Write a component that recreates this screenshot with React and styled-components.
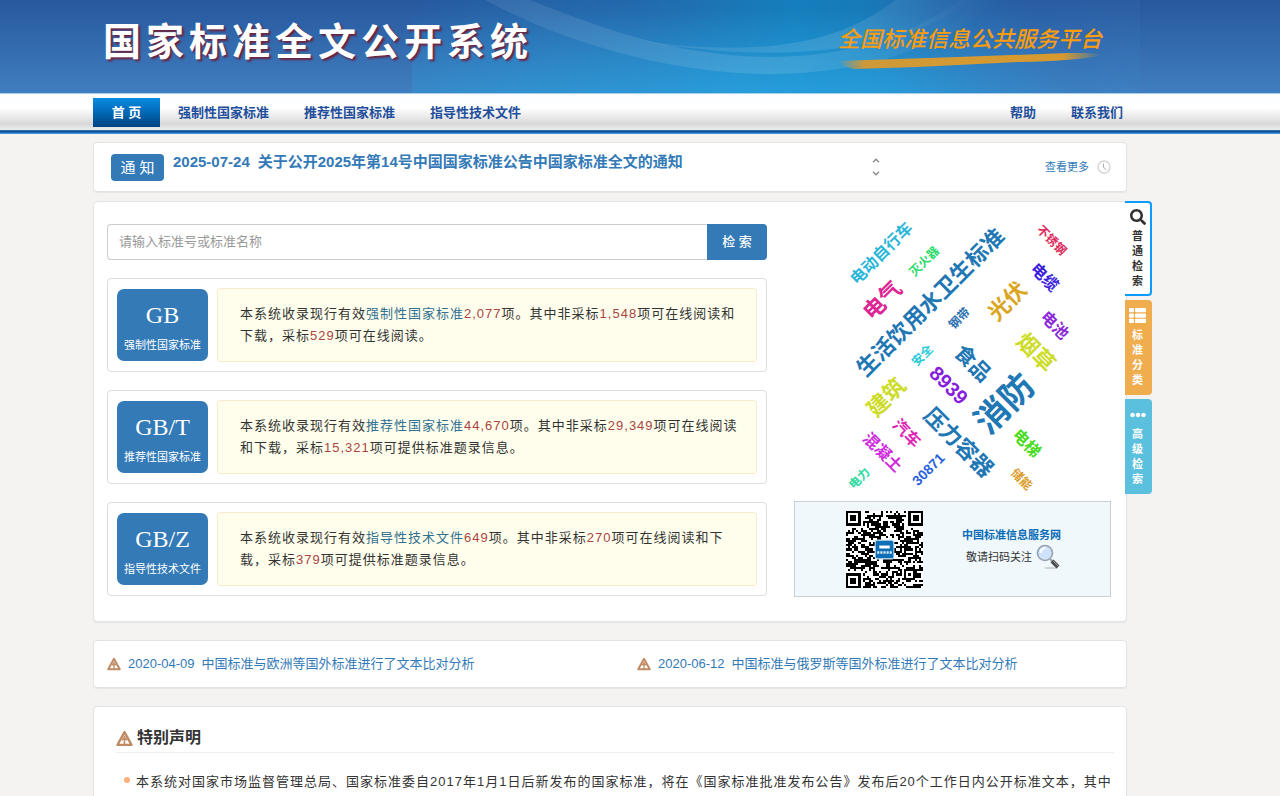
import styled, { createGlobalStyle } from "styled-components";
import { FaSearch, FaThList, FaEllipsisH } from "react-icons/fa";

const words = [
    { text: "消防", x: 210, y: 179, size: 34, angle: -45, color: "#1f77b4" },
    { text: "生活饮用水卫生标准", x: 136, y: 78, size: 22, angle: -45, color: "#1f77b4" },
    { text: "压力容器", x: 165, y: 218, size: 22, angle: 45, color: "#1f77b4" },
    { text: "食品", x: 179, y: 139, size: 21, angle: 45, color: "#1f77b4" },
    { text: "光伏", x: 213, y: 77, size: 22, angle: -45, color: "#daa520" },
    { text: "烟草", x: 242, y: 128, size: 22, angle: 45, color: "#cddc28" },
    { text: "建筑", x: 92, y: 173, size: 22, angle: -45, color: "#cddc28" },
    { text: "电气", x: 88, y: 76, size: 22, angle: -45, color: "#dd2694" },
    { text: "8939", x: 155, y: 161, size: 20, angle: 45, color: "#8420dd" },
    { text: "电动自行车", x: 87, y: 29, size: 16, angle: -45, color: "#29b6d8" },
    { text: "电缆", x: 251, y: 53, size: 16, angle: 45, color: "#3a20dc" },
    { text: "电池", x: 261, y: 101, size: 16, angle: 45, color: "#8b2adb" },
    { text: "电梯", x: 233, y: 219, size: 16, angle: 45, color: "#48dc20" },
    { text: "汽车", x: 113, y: 209, size: 16, angle: 45, color: "#dd26b4" },
    { text: "混凝土", x: 89, y: 228, size: 16, angle: 45, color: "#d02ade" },
    { text: "30871", x: 134, y: 245, size: 14, angle: -45, color: "#2a62dc" },
    { text: "灭火器", x: 130, y: 37, size: 12, angle: -45, color: "#2edb6e" },
    { text: "不锈钢", x: 258, y: 16, size: 12, angle: 45, color: "#dc2a5c" },
    { text: "钢带", x: 165, y: 94, size: 12, angle: -45, color: "#2a70b0" },
    { text: "安全", x: 128, y: 131, size: 12, angle: -45, color: "#2acbd8" },
    { text: "电力", x: 65, y: 254, size: 12, angle: -45, color: "#2edba0" },
    { text: "储能", x: 228, y: 255, size: 12, angle: 45, color: "#dc9a28" },
];

const QR_SIZE = 37;

const finderAt = (x, y) => {
    const corners = [[0, 0], [QR_SIZE - 7, 0], [0, QR_SIZE - 7]];
    for (const [cx, cy] of corners) {
        const dx = x - cx;
        const dy = y - cy;
        if (dx >= -1 && dx <= 7 && dy >= -1 && dy <= 7) {
            const ring = Math.max(Math.abs(dx - 3), Math.abs(dy - 3));
            return { inside: true, dark: ring === 3 || ring <= 1 };
        }
    }
    // small alignment mark
    const ring = Math.max(Math.abs(x - 30), Math.abs(y - 30));
    if (ring <= 2) return { inside: true, dark: ring !== 1 };
    return { inside: false };
};

const buildQrPath = () => {
    let seed = 20377;
    let last = false;
    let d = "";
    for (let y = 0; y < QR_SIZE; y++) {
        for (let x = 0; x < QR_SIZE; x++) {
            seed = (seed * 48271) % 2147483647;
            const finder = finderAt(x, y);
            const dark = finder.inside ? finder.dark : seed / 2147483647 > (last ? 0.38 : 0.55);
            if (dark) d += `M${x} ${y}h1v1h-1z`;
            last = dark;
        }
    }
    return d;
};

const qrPath = buildQrPath();

const WarnIcon = ({ size }) => (
    <svg width={size} height={size} viewBox="0 0 16 16" aria-hidden="true">
        <path d="M8 2L14.6 14H1.4Z" fill="none" stroke="#c08a62" strokeWidth="2.2" strokeLinejoin="round" />
        <path d="M8 5.5V14M5.6 9.6L8 7l2.4 2.6" fill="none" stroke="#c08a62" strokeWidth="1.5" />
    </svg>
);

const BannerArt = () => (
    <ArtSvg viewBox="0 0 1280 93" preserveAspectRatio="xMidYMid slice" aria-hidden="true">
        <defs>
            <linearGradient id="base" x1="0" y1="0" x2="0" y2="1">
                <stop offset="0" stopColor="#27589e" />
                <stop offset="1" stopColor="#407ebf" />
            </linearGradient>
            <linearGradient id="glow" x1="0" y1="0" x2="1" y2="0">
                <stop offset="0" stopColor="#1a94cf" stopOpacity="0" />
                <stop offset="0.3" stopColor="#1a80c0" stopOpacity="0.4" />
                <stop offset="0.52" stopColor="#1088c4" stopOpacity="0.8" />
                <stop offset="0.62" stopColor="#1088c4" stopOpacity="0.7" />
                <stop offset="0.85" stopColor="#2f6eb4" stopOpacity="0.2" />
                <stop offset="1" stopColor="#3f78b8" stopOpacity="0.15" />
            </linearGradient>
            <linearGradient id="lift" x1="0" y1="0" x2="0" y2="1">
                <stop offset="0.1" stopColor="#2aa6e2" stopOpacity="0" />
                <stop offset="1" stopColor="#2aa6e2" stopOpacity="0.75" />
            </linearGradient>
            <linearGradient id="liftFade" x1="0" y1="0" x2="1" y2="0">
                <stop offset="0" stopColor="#fff" stopOpacity="0.4" />
                <stop offset="0.45" stopColor="#fff" />
                <stop offset="0.65" stopColor="#fff" stopOpacity="0.9" />
                <stop offset="0.9" stopColor="#fff" stopOpacity="0.15" />
                <stop offset="1" stopColor="#fff" stopOpacity="0.1" />
            </linearGradient>
            <mask id="liftMask">
                <rect x="412" width="728" height="93" fill="url(#liftFade)" />
            </mask>
            <linearGradient id="wave" x1="0" y1="0" x2="1" y2="0">
                <stop offset="0" stopColor="#fff" stopOpacity="0.08" />
                <stop offset="0.6" stopColor="#fff" stopOpacity="0.12" />
                <stop offset="1" stopColor="#fff" stopOpacity="0" />
            </linearGradient>
        </defs>
        <rect width="1280" height="93" fill="url(#base)" />
        <rect x="412" width="728" height="93" fill="url(#glow)" />
        <rect x="412" width="728" height="93" fill="url(#lift)" mask="url(#liftMask)" />
        <path d="M485 0C570 46 680 75 775 74C860 73 940 50 1000 0H960C900 44 830 57 770 57C680 56 610 32 530 0Z" fill="url(#wave)" />
        <path d="M640 41C740 54 830 52 895 0H975C900 50 790 66 640 41Z" fill="url(#wave)" />
    </ArtSvg>
);

const Magnifier = () => (
    <svg width="24" height="26" viewBox="0 0 24 26" aria-hidden="true">
        <ellipse cx="15" cy="24" rx="7" ry="1" fill="#c9cfd2" />
        <path d="M14 15l3 3" stroke="#9a9fa5" strokeWidth="2" />
        <path d="M16 17l6 6" stroke="#4a4a4a" strokeWidth="4" />
        <path d="M17 17l5 5" stroke="#999" strokeWidth="1" />
        <circle cx="9" cy="9" r="7.5" fill="#cfe2fb" stroke="#98a2b0" strokeWidth="1.6" />
        <path d="M4.5 9a5 5 0 0 1 5-5" fill="none" stroke="#fff" strokeWidth="2" />
    </svg>
);

const StandardCard = ({ code, label, children }) => (
    <Card>
        <CodeLink href="#">
            <Code>{code}</Code>
            <CodeLabel>{label}</CodeLabel>
        </CodeLink>
        <Summary>
            <p>{children}</p>
        </Summary>
    </Card>
);

const App = () => {
    return (
        <>
            <GlobalStyle />
            <Banner>
                <BannerArt />
                <SiteTitle>国家标准全文公开系统</SiteTitle>
                <Platform href="#">
                    全国标准信息公共服务平台
                    <svg width="264" height="16" viewBox="0 0 264 16" aria-hidden="true">
                        <defs>
                            <linearGradient id="brush">
                                <stop offset="0" stopColor="#d89a2e" stopOpacity="0" />
                                <stop offset="0.1" stopColor="#cf9938" />
                                <stop offset="0.85" stopColor="#d89a2e" />
                                <stop offset="1" stopColor="#d89a2e" stopOpacity="0" />
                            </linearGradient>
                        </defs>
                        <path d="M0 8L120 4L230 0Q250 -1 264 2Q240 8 180 9L80 14L16 16Q4 13 0 8Z" fill="url(#brush)" />
                    </svg>
                </Platform>
            </Banner>
            <Nav>
                <HomeLink href="#">首 页</HomeLink>
                <NavLink href="#">强制性国家标准</NavLink>
                <NavLink href="#">推荐性国家标准</NavLink>
                <NavLink href="#">指导性技术文件</NavLink>
                <Spacer />
                <NavLink href="#">帮助</NavLink>
                <NavLink href="#" $last>联系我们</NavLink>
            </Nav>
            <Page>
                <NoticePanel>
                    <NoticeTag>通 知</NoticeTag>
                    <NoticeLink href="#">
                        <span>2025-07-24</span>
                        <span>关于公开2025年第14号中国国家标准公告中国家标准全文的通知</span>
                    </NoticeLink>
                    <Arrows>
                        <button type="button" aria-label="上一条">
                            <svg width="8" height="5" viewBox="0 0 8 5"><path d="M1 4.2L4 1.2l3 3" /></svg>
                        </button>
                        <button type="button" aria-label="下一条">
                            <svg width="8" height="5" viewBox="0 0 8 5"><path d="M1 .8l3 3 3-3" /></svg>
                        </button>
                    </Arrows>
                    <MoreLink href="#">
                        查看更多
                        <svg width="14" height="14" viewBox="0 0 14 14" aria-hidden="true">
                            <circle cx="7" cy="7" r="6" fill="none" stroke="#d4d4d4" strokeWidth="1.4" />
                            <path d="M6.5 3.5V7l2.6 3" fill="none" stroke="#aaa" />
                        </svg>
                    </MoreLink>
                </NoticePanel>

                <MainPanel>
                    <Left>
                        <SearchForm onSubmit={(e) => e.preventDefault()}>
                            <SearchInput type="text" aria-label="标准号或标准名称" placeholder="请输入标准号或标准名称" />
                            <SearchButton type="submit">检 索</SearchButton>
                        </SearchForm>
                        <StandardCard code="GB" label="强制性国家标准">
                            本系统收录现行有效<a href="#">强制性国家标准</a><b>2,077</b>项。其中非采标<b>1,548</b>项可在线阅读和下载，采标<b>529</b>项可在线阅读。
                        </StandardCard>
                        <StandardCard code="GB/T" label="推荐性国家标准">
                            本系统收录现行有效<a href="#">推荐性国家标准</a><b>44,670</b>项。其中非采标<b>29,349</b>项可在线阅读和下载，采标<b>15,321</b>项可提供标准题录信息。
                        </StandardCard>
                        <StandardCard code="GB/Z" label="指导性技术文件">
                            本系统收录现行有效<a href="#">指导性技术文件</a><b>649</b>项。其中非采标<b>270</b>项可在线阅读和下载，采标<b>379</b>项可提供标准题录信息。
                        </StandardCard>
                    </Left>
                    <Right>
                        <Cloud viewBox="0 0 317 268">
                            {words.map((w) => (
                                <text
                                    key={w.text}
                                    transform={`translate(${w.x} ${w.y}) rotate(${w.angle})`}
                                    fontSize={w.size}
                                    fill={w.color}
                                    textAnchor="middle"
                                    dy="0.37em"
                                >
                                    {w.text}
                                </text>
                            ))}
                        </Cloud>
                        <QrBox>
                            <svg width="77" height="77" viewBox="0 0 37 37" role="img" aria-label="二维码">
                                <rect width="37" height="37" fill="#fff" />
                                <path d={qrPath} fill="#000" shapeRendering="crispEdges" />
                                <rect x="14" y="14" width="9" height="9" rx="1" fill="#0d6fb8" stroke="#cfe6f5" strokeWidth="0.5" />
                                <path d="M16 17.3h5" stroke="#fff" strokeWidth="1.4" />
                                <path d="M15 20h7" stroke="#dceefa" strokeWidth="1.2" strokeDasharray="1 .5" />
                            </svg>
                            <QrText>
                                <a href="#">中国标准信息服务网</a>
                                <QrHint>
                                    敬请扫码关注
                                    <Magnifier />
                                </QrHint>
                            </QrText>
                        </QrBox>
                    </Right>
                    <SideTabs>
                        <SideTab href="#" $color="#333" $bg="#fff" $border="#0c9cff">
                            <FaSearch size={16} />
                            <span>普通检索</span>
                        </SideTab>
                        <SideTab href="#" $color="#fff" $bg="#f0ad4e" $border="#f0ad4e">
                            <FaThList size={17} />
                            <span>标准分类</span>
                        </SideTab>
                        <SideTab href="#" $color="#fff" $bg="#5bc0de" $border="#5bc0de">
                            <FaEllipsisH size={16} />
                            <span>高级检索</span>
                        </SideTab>
                    </SideTabs>
                </MainPanel>

                <LinksPanel>
                    <NewsLink href="#">
                        <WarnIcon size={14} />
                        <span>2020-04-09</span>
                        <span>中国标准与欧洲等国外标准进行了文本比对分析</span>
                    </NewsLink>
                    <NewsLink href="#">
                        <WarnIcon size={14} />
                        <span>2020-06-12</span>
                        <span>中国标准与俄罗斯等国外标准进行了文本比对分析</span>
                    </NewsLink>
                </LinksPanel>

                <Statement>
                    <StatementTitle>
                        <WarnIcon size={17} />
                        特别声明
                    </StatementTitle>
                    <StatementList>
                        <li>本系统对国家市场监督管理总局、国家标准委自2017年1月1日后新发布的国家标准，将在《国家标准批准发布公告》发布后20个工作日内公开标准文本，其中</li>
                    </StatementList>
                </Statement>
            </Page>
        </>
    );
};

const GlobalStyle = createGlobalStyle`
    * {
        box-sizing: border-box;
    }
    body {
        margin: 0;
        background: #f4f3f1;
        color: #333;
        font-family: "Liberation Sans", "Noto Sans CJK SC", sans-serif;
        font-size: 13px;
        line-height: 22px;
    }
    a {
        color: #337ab7;
        text-decoration: none;
    }
    h1, h2, p, ul {
        margin: 0;
        padding: 0;
    }
    button, input {
        font: inherit;
    }
`
const Banner = styled.header`
    position: relative;
    display: flex;
    align-items: center;
    justify-content: space-between;
    height: 93px;
    padding: 0 178px 0 103px;
    overflow: hidden;
    background: #27589e;
`
const ArtSvg = styled.svg`
    position: absolute;
    inset: 0;
    width: 100%;
    height: 100%;
`
const SiteTitle = styled.h1`
    position: relative;
    padding-bottom: 10px;
    color: white;
    font-size: 38px;
    line-height: 44px;
    font-weight: 700;
    letter-spacing: 5px;
    text-shadow: 2px 2px 2px #6b2340;
`
const Platform = styled.a`
    position: relative;
    display: flex;
    flex-direction: column;
    padding-top: 2px;
    color: #ff9c0a;
    font-size: 22px;
    line-height: 26px;
    font-style: italic;
    font-weight: 500;
`
const Nav = styled.nav`
    display: flex;
    align-items: center;
    height: 41px;
    padding: 0 153px 4px 93px;
    border-top: 1px solid #a9cdec;
    background:
        linear-gradient(#4a7aa8, #0b4f96 30%, #2277c8 80%, #8fbde6) bottom / 100% 4px no-repeat,
        linear-gradient(#fcfdff 0, #fff 35%, #d8d8d8 75%, #eee 90%);
`
const NavLink = styled.a`
    padding: 2px ${({ $last }) => ($last ? "4px" : "17px")} 0 18px;
    color: #1f4f9c;
    font-weight: 700;
`
const HomeLink = styled.a`
    width: 67px;
    height: 29px;
    background: linear-gradient(#0a8de0, #0372c4 35%, #00437f);
    color: white;
    line-height: 29px;
    font-weight: 700;
    text-align: center;
`
const Spacer = styled.div`
    flex: 1;
`
const Page = styled.main`
    display: flex;
    flex-direction: column;
    padding: 8px 153px 0 93px;
`
const Panel = styled.section`
    border: 1px solid #e3e3e3;
    border-radius: 4px;
    background: white;
    box-shadow: 0 1px 1px rgba(0, 0, 0, 0.06);
`
const NoticePanel = styled(Panel)`
    display: flex;
    align-items: center;
    height: 50px;
    padding: 0 15px 0 17px;
`
const NoticeTag = styled.span`
    width: 53px;
    height: 27px;
    border-radius: 4px;
    background: #337ab7;
    color: white;
    font-size: 15px;
    line-height: 27px;
    text-align: center;
`
const NoticeLink = styled.a`
    display: flex;
    gap: 8px;
    padding: 0 0 10px 9px;
    font-size: 15px;
    font-weight: 700;
`
const Arrows = styled.div`
    display: flex;
    flex-direction: column;
    gap: 8px;
    margin: 0 165px 0 auto;

    button {
        display: flex;
        padding: 0;
        border: 0;
        background: none;
    }
    path {
        fill: none;
        stroke: #888;
        stroke-width: 1.3;
    }
`
const MoreLink = styled.a`
    display: flex;
    align-items: center;
    gap: 8px;
    font-size: 11px;
`
const MainPanel = styled(Panel)`
    position: relative;
    display: grid;
    grid-template-columns: minmax(0, 1fr) 317px;
    gap: 27px;
    margin-top: 9px;
    padding: 22px 15px 24px 13px;
`
const Left = styled.div`
    display: flex;
    flex-direction: column;
    gap: 18px;
`
const SearchForm = styled.form`
    display: flex;
    height: 36px;
`
const SearchInput = styled.input`
    flex: 1;
    padding: 0 11px;
    border: 1px solid #ccc;
    border-right: 0;
    border-radius: 4px 0 0 4px;

    &::placeholder {
        color: #999;
    }
`
const SearchButton = styled.button`
    width: 60px;
    padding: 0;
    border: 0;
    border-radius: 0 4px 4px 0;
    background: #337ab7;
    color: white;
    font-weight: 500;
`
const Card = styled.article`
    display: flex;
    gap: 9px;
    min-height: 94px;
    padding: 9px;
    border: 1px solid #ddd;
    border-radius: 4px;
`
const CodeLink = styled.a`
    display: flex;
    flex-direction: column;
    align-items: center;
    gap: 6px;
    flex: none;
    width: 91px;
    margin: 1px 0;
    padding-top: 12px;
    border-radius: 7px;
    background: #337ab7;
    color: white;
`
const Code = styled.span`
    font-family: "Liberation Serif", "Noto Sans CJK SC", serif;
    font-size: 24px;
    line-height: 28px;
`
const CodeLabel = styled.span`
    font-size: 11px;
    line-height: 20px;
`
const Summary = styled.div`
    display: flex;
    align-items: center;
    flex: 1;
    padding: 0 14px 0 22px;
    border: 1px solid #faebcc;
    border-radius: 3px;
    background: #fffeec;
    letter-spacing: 1px;

    a {
        color: #31708f;
    }
    b {
        color: #a94442;
        font-weight: 400;
    }
`
const Right = styled.div`
    display: flex;
    flex-direction: column;
    gap: 9px;
`
const Cloud = styled.svg`
    width: 317px;
    height: 268px;
    overflow: visible;
    font-weight: 700;
`
const QrBox = styled.div`
    display: flex;
    align-items: center;
    gap: 39px;
    height: 96px;
    padding-left: 51px;
    border: 1px solid #c9d0d3;
    background: #f0f8fb;
`
const QrText = styled.div`
    display: flex;
    flex-direction: column;
    padding-bottom: 6px;
    font-size: 11px;

    a {
        color: #0a6cb8;
        font-weight: 700;
    }
`
const QrHint = styled.span`
    display: flex;
    align-items: center;
    gap: 4px;
    height: 22px;
    padding-left: 4px;
`
const SideTabs = styled.aside`
    position: absolute;
    top: -1px;
    left: 100%;
    display: flex;
    flex-direction: column;
    gap: 4px;
    margin-left: -1px;
`
const SideTab = styled.a`
    display: flex;
    flex-direction: column;
    align-items: center;
    justify-content: center;
    gap: 4px;
    width: 27px;
    height: 95px;
    border: 2px solid ${({ $border }) => $border};
    border-left: 0;
    border-radius: 0 4px 4px 0;
    background: ${({ $bg }) => $bg};
    color: ${({ $color }) => $color};
    font-size: 11px;
    line-height: 15px;
    font-weight: 700;

    span {
        width: 11px;
    }
`
const LinksPanel = styled(Panel)`
    display: grid;
    grid-template-columns: 530fr 476fr;
    margin-top: 18px;
    padding: 12px 13px;
`
const NewsLink = styled.a`
    display: flex;
    align-items: center;
    gap: 7px;
`
const Statement = styled(Panel)`
    margin: 18px 0;
    padding: 19px 12px 24px 22px;
`
const StatementTitle = styled.h2`
    display: flex;
    align-items: center;
    gap: 4px;
    padding-bottom: 2px;
    border-bottom: 1px solid #eee;
    font-size: 16px;
    line-height: 24px;
`
const StatementList = styled.ul`
    padding-top: 18px;
    list-style: none;
    letter-spacing: 1px;

    li {
        display: flex;
        gap: 6px;
        padding-left: 8px;
    }
    li::before {
        content: "";
        flex: none;
        width: 6px;
        height: 6px;
        margin-top: 6px;
        border-radius: 50%;
        background: #fbb07c;
    }
`
export default App;
